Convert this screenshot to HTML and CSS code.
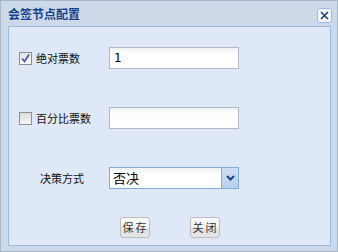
FILE: index.html
```html
<!DOCTYPE html>
<html>
<head>
<meta charset="utf-8">
<link rel="stylesheet" href="styles.css">
</head>
<body>
<div class="win">
  <div class="titlebar">
    <span class="title">会签节点配置</span>
    <span class="close"><svg width="11" height="11" viewBox="0 0 11 11"><path d="M2 2L9 9M9 2L2 9" stroke="#15428B" stroke-width="1.6" fill="none"/></svg></span>
  </div>
  <div class="body">
    <div class="form">
      <div class="row">
        <div class="lab">
          <span class="cb checked"><svg width="11" height="11" viewBox="0 0 11 11"><path d="M2 5.5L4.5 8.5L9 1.5" stroke="#3b4f9a" stroke-width="1.6" fill="none"/></svg></span>
          <span class="txt">绝对票数</span>
        </div>
        <div class="input">1</div>
      </div>
      <div class="row">
        <div class="lab">
          <span class="cb"></span>
          <span class="txt">百分比票数</span>
        </div>
        <div class="input"></div>
      </div>
      <div class="row">
        <div class="lab plain"><span class="txt">决策方式</span></div>
        <div class="combo">
          <span class="val">否决</span>
          <span class="trigger"><svg width="11" height="8" viewBox="0 0 11 8"><path d="M2 2L5.5 5.5L9 2" stroke="#15428B" stroke-width="2" fill="none"/></svg></span>
        </div>
      </div>
    </div>
    <div class="buttons">
      <span class="btn">保存</span>
      <span class="btn">关闭</span>
    </div>
  </div>
</div>
</body>
</html>
```
FILE: styles.css
```css
html, body {
  margin: 0;
  padding: 0;
  background: #ffffff;
}
.win {
  width: 338px;
  height: 252px;
  box-sizing: border-box;
  border: 1px solid #a7b6c9;
  background: #cdd9e8;
  font-family: "Noto Sans CJK SC", "Liberation Sans", sans-serif;
  display: flex;
  flex-direction: column;
}
.titlebar {
  height: 25px;
  display: flex;
  align-items: center;
  justify-content: space-between;
  padding: 0 5px 0 7px;
}
.title {
  font-size: 12px;
  font-weight: bold;
  color: #15428b;
  line-height: 14px;
  margin-top: 1px;
}
.close {
  width: 13px;
  height: 13px;
  border: 1px solid #99bbe8;
  border-radius: 3px;
  background: #f2f6fb;
  display: flex;
  align-items: center;
  justify-content: center;
  margin-top: 3px;
}
.body {
  margin: 0 6px 0 7px;
  height: 220px;
  box-sizing: border-box;
  border: 1px solid #99bbe8;
  background: #dfe8f6;
  padding-top: 20px;
}
.form {
  display: flex;
  flex-direction: column;
  gap: 38px;
}
.row {
  display: flex;
  align-items: center;
  height: 22px;
}
.lab {
  width: 100px;
  display: flex;
  align-items: center;
  padding-left: 10px;
  box-sizing: border-box;
}
.lab.plain {
  padding-left: 31px;
}
.txt {
  font-size: 11px;
  color: #111;
  line-height: 13px;
}
.cb {
  width: 13px;
  height: 13px;
  box-sizing: border-box;
  border: 1px solid #8e8f8f;
  background: linear-gradient(#dcdcdc, #f6f6f6);
  display: flex;
  align-items: center;
  justify-content: center;
  margin-right: 4px;
}
.cb.checked {
  background: linear-gradient(#e4e4e4, #f8f8f8);
}
.input {
  width: 130px;
  height: 22px;
  box-sizing: border-box;
  border: 1px solid #b5b8c8;
  background: linear-gradient(#eef2f2, #ffffff 6px, #ffffff);
  font-family: "DejaVu Sans", sans-serif;
  font-size: 12px;
  line-height: 20px;
  padding-left: 4px;
  color: #000;
}
.combo {
  width: 130px;
  height: 22px;
  box-sizing: border-box;
  border: 1px solid #7eadd9;
  background: linear-gradient(#eef2f2, #ffffff 6px, #ffffff);
  display: flex;
}
.val {
  flex: 1;
  font-size: 13px;
  line-height: 20px;
  padding-left: 3px;
  color: #000;
}
.trigger {
  width: 16px;
  border-left: 1px solid #7eadd9;
  background: linear-gradient(#cfdff2, #b9d0ec);
  display: flex;
  align-items: center;
  justify-content: center;
}
.buttons {
  display: flex;
  justify-content: center;
  gap: 40px;
  margin-top: 28px;
}
.btn {
  width: 30px;
  height: 21px;
  box-sizing: border-box;
  border: 1px solid #bdbdbd;
  border-radius: 3px;
  background: linear-gradient(#fafafa, #f1f1f1 55%, #e0e0e0 56%, #e6e6e6);
  font-size: 11px;
  line-height: 19px;
  color: #333;
  letter-spacing: 2px;
  padding-left: 2px;
  white-space: nowrap;
  overflow: hidden;
}
```
